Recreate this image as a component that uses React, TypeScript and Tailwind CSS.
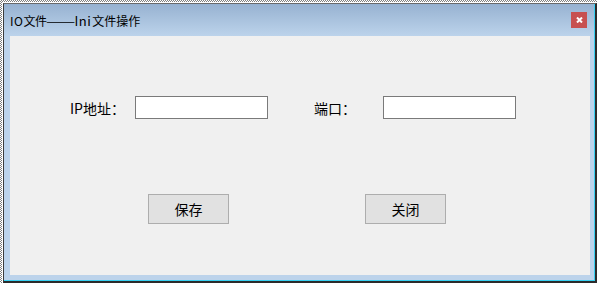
import React from "react";

export default function App() {
  const font = { fontFamily: '"Noto Sans CJK SC", "Noto Sans", sans-serif' };
  return (
    <div
      className="w-[597px] h-[283px] flex flex-col pt-[2px] pl-[2px] bg-[repeating-conic-gradient(#808080_0_25%,#ffffff_0_50%)] bg-[length:2px_2px] text-black"
      style={font}
    >
      <div className="flex-1 flex flex-col border-t border-l border-white">
        <div className="flex-1 flex flex-col border-t border-l border-t-[#6a6a6a] border-l-[#3a3a3a] border-r-2 border-b-2 border-r-[#2b2b2b] border-b-[#2b2b2b]">
          <div className="flex-1 flex flex-col border-r border-b border-[#38d0f2]">
            <div className="flex-1 flex flex-col bg-[linear-gradient(to_bottom,#97b2d1_0px,#bcd3eb_32px,#bcd3eb_100%)]">
              {/* title bar */}
              <div className="h-[32px] flex items-center pl-[6px] pr-[7px]">
                <span className="text-[12px] leading-none mt-[1px] whitespace-nowrap flex items-baseline">
                  <span className="tracking-[0.5px]">IO</span>
                  <span className="tracking-[-0.5px]">文件</span>
                  <span className="inline-block w-[28px] overflow-visible">
                    <span className="inline-block scale-x-[1.45] origin-left">——</span>
                  </span>
                  <span className="text-[13px] tracking-[0.5px] pr-[1px]">Ini</span>
                  <span>文件操作</span>
                </span>
                <div className="ml-auto w-[16px] h-[16px] bg-[#c75050] flex items-center justify-center">
                  <svg width="7" height="6" viewBox="0 0 7 6">
                    <path d="M1 0.5 L6 5.5 M6 0.5 L1 5.5" stroke="#ffffff" strokeWidth="2" />
                  </svg>
                </div>
              </div>
              {/* content */}
              <div className="flex-1 ml-[6px] mr-[4px] mb-[5px] bg-[#f0f0f0] flex flex-col">
                <div className="flex items-center pl-[60px] pt-[60px]">
                  <span className="w-[65px] text-[14px] leading-none">IP地址：</span>
                  <div className="w-[133px] h-[23px] bg-white border border-[#7a7a7a]" />
                  <span className="ml-[46px] w-[69px] text-[14px] leading-none">端口：</span>
                  <div className="w-[133px] h-[23px] bg-white border border-[#7a7a7a]" />
                </div>
                <div className="flex items-center pl-[138px] mt-[75px]">
                  <div className="w-[81px] h-[30px] bg-[#e1e1e1] border border-[#adadad] flex items-center justify-center text-[14px]">
                    保存
                  </div>
                  <div className="ml-[136px] w-[81px] h-[30px] bg-[#e1e1e1] border border-[#adadad] flex items-center justify-center text-[14px]">
                    关闭
                  </div>
                </div>
              </div>
            </div>
          </div>
        </div>
      </div>
    </div>
  );
}
